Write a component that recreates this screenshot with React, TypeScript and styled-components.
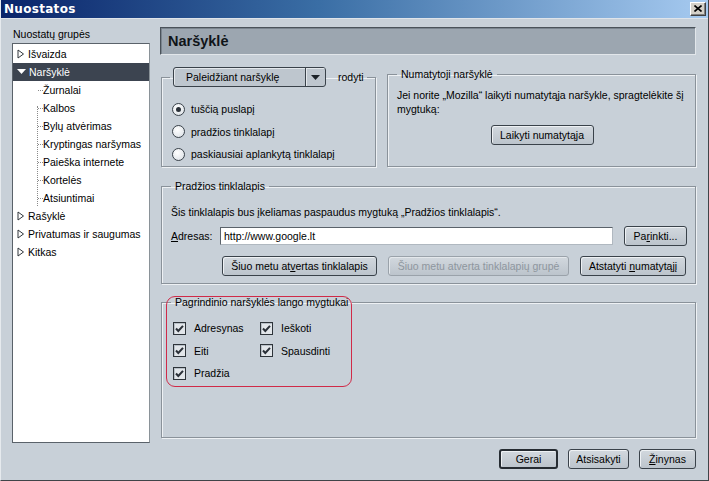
import React from "react"
import styled, { createGlobalStyle, css } from "styled-components"

const GlobalStyle = createGlobalStyle`
  html, body {
    margin: 0;
    padding: 0;
    background: #c8d0d8;
  }
  body {
    font-family: "Liberation Sans", Arial, sans-serif;
    font-size: 10.5px;
    color: #000;
  }
  * { box-sizing: border-box; }
`

const Window = styled.div`
  width: 709px;
  height: 481px;
  display: flex;
  flex-direction: column;
  background: #c8d0d8;
  border-left: 1px solid #e6eaee;
  border-right: 1px solid #404448;
  border-bottom: 1px solid #404448;
  overflow: hidden;
`

const TitleBar = styled.div`
  height: 19px;
  flex: none;
  display: flex;
  align-items: center;
  justify-content: space-between;
  padding: 0 2px 1px 3px;
  background: linear-gradient(90deg, #0a246a 0%, #3a6ea5 45%, #a6caf0 100%);
  border-bottom: 1px solid #dfe4ea;
`

const TitleText = styled.span`
  color: #fff;
  font-family: "DejaVu Sans", sans-serif;
  font-weight: bold;
  font-size: 12px;
  letter-spacing: 0.3px;
`

const CloseButton = styled.div`
  width: 16px;
  height: 14px;
  background: #d4d0c8;
  border: 1px solid;
  border-color: #fff #404040 #404040 #fff;
  box-shadow: inset -1px -1px #808080;
  display: flex;
  align-items: center;
  justify-content: center;
`

const Content = styled.div`
  flex: 1;
  display: flex;
  gap: 10px;
  padding: 8px 12px 0 11px;
  min-height: 0;
`

const Sidebar = styled.div`
  width: 138px;
  display: flex;
  flex-direction: column;
`

const SidebarLabel = styled.div`
  height: 16px;
  line-height: 14px;
  padding-left: 1px;
`

const Tree = styled.div`
  flex: 1;
  background: #fff;
  border: 1px solid #5a626a;
  border-right-color: #8a9298;
  padding-top: 1px;
  position: relative;
`

const TreeRow = styled.div<{ $selected?: boolean; $child?: boolean }>`
  height: 18px;
  display: flex;
  align-items: center;
  gap: 3px;
  padding-left: ${(p) => (p.$child ? "30px" : "4px")};
  white-space: nowrap;
  ${(p) =>
    p.$selected &&
    css`
      background: #3c4450;
      color: #fff;
    `}
`

const TreeLines = styled.div`
  position: absolute;
  left: 24px;
  top: 62px;
  width: 6px;
  height: 100px;
  border-left: 1px dotted #8a8a8a;
`

const TreeTick = styled.span`
  width: 5px;
  border-top: 1px dotted #8a8a8a;
  margin-left: -5px;
  margin-right: -3px;
`

const Main = styled.div`
  flex: 1;
  display: flex;
  flex-direction: column;
  gap: 12px;
  padding-bottom: 5px;
`

const Header = styled.div`
  height: 28px;
  flex: none;
  background: #9ca6b0;
  border: 1px solid #4a525a;
  border-right-color: #e2e6ea;
  border-bottom-color: #e2e6ea;
  box-shadow: inset 1px 1px #7a848e;
  display: flex;
  align-items: center;
  padding-left: 7px;
  font-size: 14.5px;
  font-weight: bold;
  color: #101418;
`

const GroupRow = styled.div`
  display: flex;
  gap: 11px;
  padding-left: 1px;
  height: 100px;
`

const Group = styled.fieldset<{ $grow?: boolean; $width?: number }>`
  margin: 0;
  min-width: 0;
  border: 1px solid #8a929a;
  box-shadow: 1px 1px 0 #eef1f4, inset 1px 1px 0 #eef1f4;
  padding: 4px 8px 8px 9px;
  position: relative;
  ${(p) => (p.$grow ? "flex: 1;" : "")}
  ${(p) => (p.$width ? `width: ${p.$width}px; flex: none;` : "")}
`

const Legend = styled.legend`
  padding: 0 4px;
  margin-left: 0;
  display: flex;
  align-items: center;
  gap: 12px;
  line-height: 14px;
`

const DropLegend = styled(Legend)`
  padding: 0 3px;
  margin-left: -1px;
`

const FullGroup = styled(Group)<{ $shift?: number; $bottom?: number }>`
  margin-left: 1px;
  margin-top: ${(p) => (p.$shift ? `${p.$shift}px` : "0")};
  padding-bottom: ${(p) => (p.$bottom !== undefined ? `${p.$bottom}px` : "8px")};
`

const Dropdown = styled.div`
  width: 153px;
  height: 20px;
  display: flex;
  border: 1px solid #3a424a;
  border-radius: 3px;
  background: #bec6ce;
  box-shadow: inset 1px 1px #e4e8ec;
  overflow: hidden;
`

const DropdownLabel = styled.div`
  flex: 1;
  display: flex;
  align-items: center;
  padding-left: 12px;
`

const DropdownArrow = styled.div`
  width: 20px;
  border-left: 1px solid #3a424a;
  display: flex;
  align-items: center;
  justify-content: center;
  box-shadow: inset 1px 1px #e4e8ec;
`

const RadioList = styled.div`
  display: flex;
  flex-direction: column;
  gap: 4px;
  padding-top: 9px;
  padding-left: 1px;
`

const OptionRow = styled.label<{ $gap?: number }>`
  height: 18.5px;
  display: flex;
  align-items: center;
  gap: ${(p) => p.$gap ?? 6}px;
  white-space: nowrap;
`

const RadioCircle = styled.span<{ $checked?: boolean }>`
  width: 13px;
  height: 13px;
  border-radius: 50%;
  border: 1px solid #3a424a;
  background: radial-gradient(circle at 40% 35%, #ffffff 0%, #e4e8ec 70%, #c4ccd4 100%);
  display: flex;
  align-items: center;
  justify-content: center;
  &::after {
    content: "";
    width: 5px;
    height: 5px;
    border-radius: 50%;
    background: ${(p) => (p.$checked ? "#2a3038" : "transparent")};
  }
`

const Para = styled.div`
  line-height: 14px;
  padding-top: 3px;
`

const Center = styled.div`
  display: flex;
  justify-content: center;
  padding-top: 9px;
`

const Button = styled.button<{ $w?: number; $default?: boolean }>`
  height: 20px;
  width: ${(p) => (p.$w ? `${p.$w}px` : "auto")};
  padding: 0 4px;
  font-family: inherit;
  font-size: 10.5px;
  color: #000;
  background: linear-gradient(#d2d8de, #bcc4cc);
  border: ${(p) => (p.$default ? "2px solid #262c32" : "1px solid #3a424a")};
  border-radius: 3px;
  box-shadow: inset 1px 1px #eef1f4;
  white-space: nowrap;
  &:disabled {
    color: #8e969e;
    border-color: #9aa2aa;
    box-shadow: inset 1px 1px #e4e8ec;
  }
`

const FieldRow = styled.div`
  display: flex;
  align-items: center;
  height: 20px;
  gap: 11px;
`

const FieldLabel = styled.span`
  width: 38px;
`

const TextInput = styled.div`
  flex: 1;
  height: 18px;
  background: #fff;
  border: 1px solid #5a626a;
  border-right-color: #b0b8c0;
  border-bottom-color: #b0b8c0;
  display: flex;
  align-items: center;
  padding-left: 3px;
`

const ButtonRow = styled.div`
  display: flex;
  justify-content: flex-end;
  gap: 11px;
  padding-top: 10px;
  padding-right: 1px;
`

const Stack = styled.div`
  display: flex;
  flex-direction: column;
  gap: 8px;
  padding-top: 9px;
`

const CheckGrid = styled.div`
  display: grid;
  grid-template-columns: 87px auto;
  row-gap: 4px;
  padding-top: 6px;
  padding-left: 2px;
  width: 180px;
`

const CheckBox = styled.span`
  width: 13px;
  height: 13px;
  border: 1px solid #2e343a;
  background: #e2e6ea;
  box-shadow: inset 1px 1px #b8c0c8;
  display: flex;
  align-items: center;
  justify-content: center;
`

const Highlight = styled.div`
  position: absolute;
  left: 4px;
  top: -13px;
  width: 186px;
  height: 91px;
  border: 1.5px solid #d02a48;
  border-radius: 9px;
  pointer-events: none;
`

const Footer = styled.div`
  flex: none;
  display: flex;
  justify-content: flex-end;
  gap: 10px;
  padding: 6px 12px 11px 0;
`

const U = styled.span`
  text-decoration: underline;
`

const TriangleRight = () => (
  <svg width="8" height="10" viewBox="0 0 8 10">
    <polygon points="1,1 6.5,5 1,9" fill="#fff" stroke="#30363c" strokeWidth="1" />
  </svg>
)

const TriangleDown = () => (
  <svg width="9" height="8" viewBox="0 0 9 8">
    <polygon points="0,1 9,1 4.5,6" fill="#fff" />
  </svg>
)

const Check = () => (
  <svg width="11" height="11" viewBox="0 0 11 11">
    <path d="M2 5.5 L4.3 8 L9 2.8" fill="none" stroke="#2a3038" strokeWidth="2" />
  </svg>
)

type Node = { label: string; level: 0 | 1; selected?: boolean; expanded?: boolean }

const tree: Node[] = [
  { label: "Išvaizda", level: 0 },
  { label: "Naršyklė", level: 0, selected: true, expanded: true },
  { label: "Žurnalai", level: 1 },
  { label: "Kalbos", level: 1 },
  { label: "Bylų atvėrimas", level: 1 },
  { label: "Kryptingas naršymas", level: 1 },
  { label: "Paieška internete", level: 1 },
  { label: "Kortelės", level: 1 },
  { label: "Atsiuntimai", level: 1 },
  { label: "Rašyklė", level: 0 },
  { label: "Privatumas ir saugumas", level: 0 },
  { label: "Kitkas", level: 0 },
]

const radios = [
  { label: "tuščią puslapį", checked: true },
  { label: "pradžios tinklalapį" },
  { label: "paskiausiai aplankytą tinklalapį" },
]

const checks = ["Adresynas", "Ieškoti", "Eiti", "Spausdinti", "Pradžia"]

export default function App() {
  return (
    <>
      <GlobalStyle />
      <Window>
        <TitleBar>
          <TitleText>Nuostatos</TitleText>
          <CloseButton>
            <svg width="8" height="7" viewBox="0 0 8 7">
              <path d="M0.5 0.5 L7.5 6.5 M7.5 0.5 L0.5 6.5" stroke="#000" strokeWidth="1.6" />
            </svg>
          </CloseButton>
        </TitleBar>

        <Content>
          <Sidebar>
            <SidebarLabel>Nuostatų grupės</SidebarLabel>
            <Tree>
              <TreeLines />
              {tree.map((n) => (
                <TreeRow key={n.label} $selected={n.selected} $child={n.level === 1}>
                  {n.level === 0 ? (n.expanded ? <TriangleDown /> : <TriangleRight />) : <TreeTick />}
                  <span>{n.label}</span>
                </TreeRow>
              ))}
            </Tree>
          </Sidebar>

          <Main>
            <Header>Naršyklė</Header>

            <GroupRow>
              <Group $width={215}>
                <DropLegend>
                  <Dropdown>
                    <DropdownLabel>Paleidžiant naršyklę</DropdownLabel>
                    <DropdownArrow>
                      <svg width="9" height="5" viewBox="0 0 9 5">
                        <polygon points="0,0 9,0 4.5,5" fill="#1c2228" />
                      </svg>
                    </DropdownArrow>
                  </Dropdown>
                  <span>rodyti</span>
                </DropLegend>
                <RadioList>
                  {radios.map((r) => (
                    <OptionRow key={r.label}>
                      <RadioCircle $checked={r.checked} />
                      {r.label}
                    </OptionRow>
                  ))}
                </RadioList>
              </Group>

              <Group $grow>
                <Legend>Numatytoji naršyklė</Legend>
                <Para>
                  Jei norite „Mozilla“ laikyti numatytąja naršykle, spragtelėkite šį mygtuką:
                </Para>
                <Center>
                  <Button $w={103}>Laikyti numatytąja</Button>
                </Center>
              </Group>
            </GroupRow>

            <FullGroup $bottom={7}>
              <Legend>Pradžios tinklalapis</Legend>
              <Stack>
                <div>Šis tinklalapis bus įkeliamas paspaudus mygtuką „Pradžios tinklalapis“.</div>
                <FieldRow>
                  <FieldLabel>
                    <U>A</U>dresas:
                  </FieldLabel>
                  <TextInput>http://www.google.lt</TextInput>
                  <Button $w={63}>
                    Pa<U>r</U>inkti...
                  </Button>
                </FieldRow>
              </Stack>
              <ButtonRow>
                <Button $w={155}>
                  Šiuo metu at<U>v</U>ertas tinklalapis
                </Button>
                <Button $w={181} disabled>
                  Šiuo metu atverta tinklalapių grupė
                </Button>
                <Button $w={106}>
                  Atstatyti <U>n</U>umatytąjį
                </Button>
              </ButtonRow>
            </FullGroup>

            <FullGroup $grow $shift={-1}>
              <Highlight />
              <Legend>Pagrindinio naršyklės lango mygtukai</Legend>
              <CheckGrid>
                {checks.map((c) => (
                  <OptionRow key={c} $gap={8}>
                    <CheckBox>
                      <Check />
                    </CheckBox>
                    {c}
                  </OptionRow>
                ))}
              </CheckGrid>
            </FullGroup>
          </Main>
        </Content>

        <Footer>
          <Button $w={59} $default>
            Gerai
          </Button>
          <Button $w={61}>Atsisakyti</Button>
          <Button $w={57}>
            <U>Ž</U>inynas
          </Button>
        </Footer>
      </Window>
    </>
  )
}
